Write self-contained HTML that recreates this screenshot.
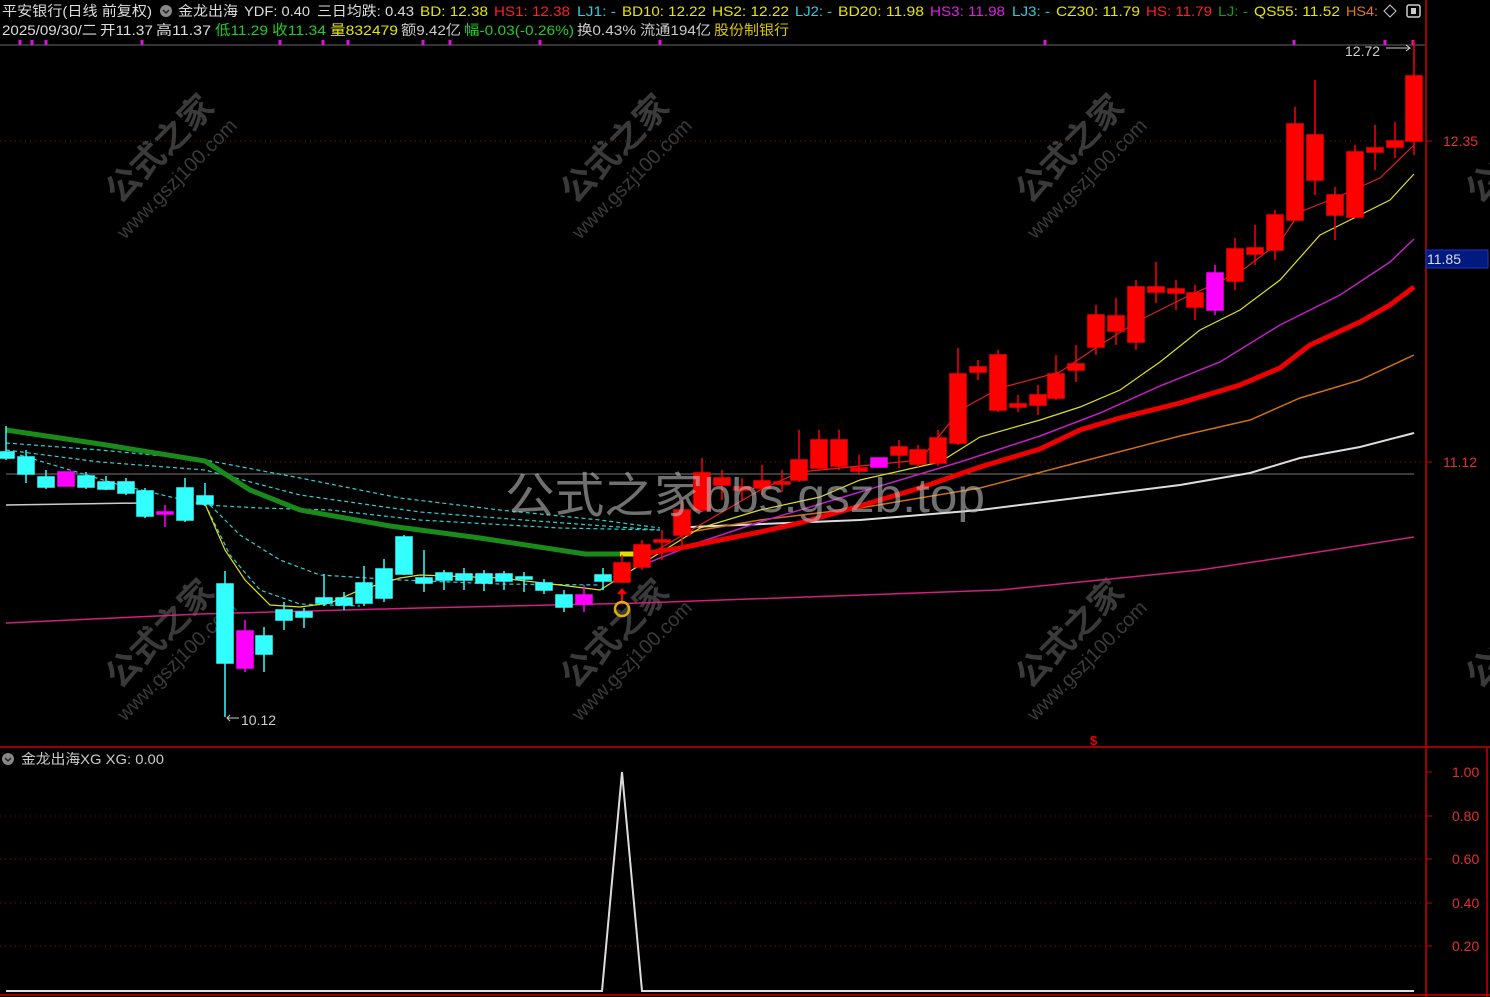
<!DOCTYPE html>
<html><head><meta charset="utf-8"><style>
html,body{margin:0;padding:0;background:#000;}
svg{display:block;}
text{font-family:"Liberation Sans","Noto Sans CJK SC",sans-serif;}
</style></head><body>
<svg width="1490" height="997" viewBox="0 0 1490 997" xmlns="http://www.w3.org/2000/svg">
<rect width="1490" height="997" fill="#000"/>
<!-- header -->
<g font-size="14">
<text x="2" y="16" fill="#ddd" textLength="150" lengthAdjust="spacingAndGlyphs">平安银行(日线 前复权)</text>
<circle cx="166" cy="11" r="6" fill="#888"/><path d="M163 10l3 3 3-3" stroke="#222" stroke-width="1.5" fill="none"/>
<text x="178" y="16" fill="#ddd" textLength="60" lengthAdjust="spacingAndGlyphs">金龙出海</text>
<text x="244" y="16" fill="#ddd" textLength="66" lengthAdjust="spacingAndGlyphs">YDF: 0.40</text>
<text x="317" y="16" fill="#ddd" textLength="97" lengthAdjust="spacingAndGlyphs">三日均跌: 0.43</text>
<text x="420" y="16" fill="#e6e600" textLength="68" lengthAdjust="spacingAndGlyphs">BD: 12.38</text>
<text x="494" y="16" fill="#ff2020" textLength="76" lengthAdjust="spacingAndGlyphs">HS1: 12.38</text>
<text x="577" y="16" fill="#3cd" textLength="39" lengthAdjust="spacingAndGlyphs">LJ1: -</text>
<text x="622" y="16" fill="#e6e600" textLength="84" lengthAdjust="spacingAndGlyphs">BD10: 12.22</text>
<text x="712" y="16" fill="#e6e600" textLength="77" lengthAdjust="spacingAndGlyphs">HS2: 12.22</text>
<text x="795" y="16" fill="#3cd" textLength="37" lengthAdjust="spacingAndGlyphs">LJ2: -</text>
<text x="838" y="16" fill="#e6e600" textLength="86" lengthAdjust="spacingAndGlyphs">BD20: 11.98</text>
<text x="930" y="16" fill="#e020e0" textLength="75" lengthAdjust="spacingAndGlyphs">HS3: 11.98</text>
<text x="1012" y="16" fill="#3cd" textLength="38" lengthAdjust="spacingAndGlyphs">LJ3: -</text>
<text x="1056" y="16" fill="#e6e600" textLength="84" lengthAdjust="spacingAndGlyphs">CZ30: 11.79</text>
<text x="1146" y="16" fill="#ff2020" textLength="66" lengthAdjust="spacingAndGlyphs">HS: 11.79</text>
<text x="1218" y="16" fill="#1a9a1a" textLength="30" lengthAdjust="spacingAndGlyphs">LJ: -</text>
<text x="1254" y="16" fill="#e6e600" textLength="86" lengthAdjust="spacingAndGlyphs">QS55: 11.52</text>
<text x="1346" y="16" fill="#e07a10" textLength="32" lengthAdjust="spacingAndGlyphs">HS4:</text>
<path d="M1390 5l6 6-6 6-6-6z" stroke="#ccc" fill="none"/>
<rect x="1407" y="5" width="13" height="12" rx="2" stroke="#ccc" fill="none" stroke-width="1.5"/><rect x="1411" y="8" width="5" height="6" fill="#ccc"/>
<text x="2" y="35" fill="#ddd" textLength="95" lengthAdjust="spacingAndGlyphs">2025/09/30/二</text>
<text x="100" y="35" fill="#ddd" textLength="53" lengthAdjust="spacingAndGlyphs">开11.37</text>
<text x="156" y="35" fill="#ddd" textLength="55" lengthAdjust="spacingAndGlyphs">高11.37</text>
<text x="215" y="35" fill="#22cc22" textLength="53" lengthAdjust="spacingAndGlyphs">低11.29</text>
<text x="272" y="35" fill="#22cc22" textLength="54" lengthAdjust="spacingAndGlyphs">收11.34</text>
<text x="330" y="35" fill="#e6e600" textLength="68" lengthAdjust="spacingAndGlyphs">量832479</text>
<text x="401" y="35" fill="#ccc" textLength="60" lengthAdjust="spacingAndGlyphs">额9.42亿</text>
<text x="464" y="35" fill="#22cc22" textLength="110" lengthAdjust="spacingAndGlyphs">幅-0.03(-0.26%)</text>
<text x="577" y="35" fill="#ccc" textLength="59" lengthAdjust="spacingAndGlyphs">换0.43%</text>
<text x="640" y="35" fill="#ccc" textLength="71" lengthAdjust="spacingAndGlyphs">流通194亿</text>
<text x="714" y="35" fill="#d8c800" textLength="75" lengthAdjust="spacingAndGlyphs">股份制银行</text>
</g>
<!-- frame -->
<line x1="0" y1="45" x2="1425" y2="45" stroke="#666"/>
<g stroke="#e010e0" stroke-width="3">
<line x1="20" y1="40" x2="20" y2="45"/><line x1="32" y1="40" x2="32" y2="45"/><line x1="46" y1="40" x2="46" y2="45"/><line x1="142" y1="40" x2="142" y2="45"/><line x1="280" y1="40" x2="280" y2="45"/><line x1="323" y1="40" x2="323" y2="45"/><line x1="348" y1="40" x2="348" y2="45"/><line x1="423" y1="40" x2="423" y2="45"/><line x1="450" y1="40" x2="450" y2="45"/><line x1="540" y1="40" x2="540" y2="45"/><line x1="660" y1="40" x2="660" y2="45"/><line x1="1045" y1="40" x2="1045" y2="45"/><line x1="1294" y1="40" x2="1294" y2="45"/><line x1="1385" y1="40" x2="1385" y2="45"/><line x1="1413" y1="40" x2="1413" y2="45"/>
</g>
<line x1="1426" y1="0" x2="1426" y2="997" stroke="#c00" stroke-width="1.5"/>
<line x1="1487" y1="748" x2="1487" y2="997" stroke="#c00" stroke-width="1.5"/>
<line x1="0" y1="747" x2="1490" y2="747" stroke="#c00" stroke-width="1.5"/>
<line x1="0" y1="995" x2="1490" y2="995" stroke="#c00" stroke-width="1.5"/>
<g stroke="#a00" stroke-dasharray="1 4">
<line x1="0" y1="141" x2="1425" y2="141"/><line x1="0" y1="462" x2="1425" y2="462"/>
<line x1="0" y1="816" x2="1425" y2="816"/><line x1="0" y1="859" x2="1425" y2="859"/><line x1="0" y1="903" x2="1425" y2="903"/><line x1="0" y1="946" x2="1425" y2="946"/>
</g>
<line x1="6" y1="474" x2="1414" y2="474" stroke="#777"/>
<g font-size="14" fill="#e03030">
<text x="1443" y="146">12.35</text><text x="1443" y="467">11.12</text>
<text x="1452" y="777">1.00</text><text x="1452" y="821">0.80</text><text x="1452" y="864">0.60</text><text x="1452" y="908">0.40</text><text x="1452" y="951">0.20</text>
</g>
<g stroke="#c00"><line x1="1426" y1="772" x2="1432" y2="772"/><line x1="1426" y1="816" x2="1432" y2="816"/><line x1="1426" y1="859" x2="1432" y2="859"/><line x1="1426" y1="903" x2="1432" y2="903"/><line x1="1426" y1="946" x2="1432" y2="946"/><line x1="1426" y1="141" x2="1432" y2="141"/><line x1="1426" y1="462" x2="1432" y2="462"/></g>
<rect x="1426" y="250" width="62" height="18" fill="#001a80" stroke="#2233cc"/>
<text x="1427" y="264" font-size="14" fill="#ddd">11.85</text>

<!-- watermarks -->
<g fill="#3a3a3a" font-size="34" font-weight="bold">
<text transform="translate(120,205) rotate(-45)">公式之家</text>
<text transform="translate(575,205) rotate(-45)">公式之家</text>
<text transform="translate(1030,205) rotate(-45)">公式之家</text>
<text transform="translate(120,690) rotate(-45)">公式之家</text>
<text transform="translate(575,690) rotate(-45)">公式之家</text>
<text transform="translate(1030,690) rotate(-45)">公式之家</text>
<text transform="translate(1480,205) rotate(-45)">公式</text>
<text transform="translate(1480,690) rotate(-45)">公式</text>
</g>
<g fill="#3a3a3a" font-size="20">
<text transform="translate(125,240) rotate(-45)">www.gszj100.com</text>
<text transform="translate(580,240) rotate(-45)">www.gszj100.com</text>
<text transform="translate(1035,240) rotate(-45)">www.gszj100.com</text>
<text transform="translate(125,722) rotate(-45)">www.gszj100.com</text>
<text transform="translate(580,722) rotate(-45)">www.gszj100.com</text>
<text transform="translate(1035,722) rotate(-45)">www.gszj100.com</text>
</g>

<!-- MA lines -->
<g fill="none">
<polyline stroke="#d02080" stroke-width="1.5" points="6,623 200,614 420,608 640,603 1000,590 1200,570 1280,558 1414,537"/>
<polyline stroke="#ccc" stroke-width="1.5" points="6,505 140,503"/>
<polyline stroke="#ddd" stroke-width="2" points="690,527 860,520 980,510 1100,495 1180,485 1250,473 1300,458 1360,447 1414,433"/>
<polyline stroke="#d07010" stroke-width="1.5" points="690,532 760,520 860,508 980,488 1080,462 1180,436 1250,420 1300,398 1360,380 1414,355"/>
<polyline stroke="#c020c0" stroke-width="1.5" points="650,562 700,542 760,522 860,492 960,462 1040,436 1100,413 1160,386 1220,362 1280,325 1340,295 1390,262 1414,239"/>
<g stroke="#30d0d0" stroke-width="1.2" stroke-dasharray="4 3">
<polyline points="6,443 100,450 205,460 300,478 400,498 500,510 600,520 660,528"/>
<polyline points="6,450 100,462 205,470 300,495 420,512 550,522 660,530"/>
<polyline points="20,455 120,485 205,505 260,508 330,510 420,520 560,528 660,530"/>
<polyline points="205,500 240,535 280,560 320,575 400,580 500,584 600,585"/>
<polyline points="205,504 230,555 260,590 300,604 360,606"/>
</g>
<polyline stroke="#e0e020" stroke-width="1.2" points="205,504 225,550 245,580 270,605 300,607 330,603 360,590 400,578 420,575 500,578 560,585 600,590 640,565 700,528 760,510 820,497 860,480 940,462 980,437 1040,420 1080,407 1120,390 1160,362 1200,330 1240,310 1280,280 1320,235 1360,215 1390,200 1414,174"/>
<polyline stroke="#e02020" stroke-width="1.2" points="640,560 700,525 760,490 800,472 860,466 920,460 960,410 1000,388 1060,372 1100,345 1140,320 1180,300 1240,272 1280,242 1300,212 1340,196 1380,178 1414,145"/>
<polyline stroke="#1a8a1a" stroke-width="5" points="6,430 100,444 205,461 250,490 300,510 390,526 480,538 585,554 620,554"/>
<polyline stroke="#e0e000" stroke-width="5" points="620,554 636,554"/>
<polyline stroke="#ee0000" stroke-width="5" points="636,555 680,548 720,540 760,532 800,523 860,506 920,488 980,467 1040,449 1080,430 1120,418 1180,403 1240,385 1280,368 1310,345 1360,322 1390,305 1414,287"/>
</g>

<!-- candles -->
<g id="candles" stroke-width="1.5">
<g stroke="#3ff" fill="#3ff">
<line x1="6" y1="426" x2="6" y2="460"/><rect x="-2" y="452" width="16" height="6"/>
<line x1="26" y1="450" x2="26" y2="483"/><rect x="18" y="457" width="16" height="17"/>
<line x1="46" y1="470" x2="46" y2="489"/><rect x="38" y="477" width="16" height="10"/>
<line x1="86" y1="472" x2="86" y2="489"/><rect x="78" y="476" width="16" height="11"/>
<line x1="106" y1="476" x2="106" y2="490"/><rect x="98" y="482" width="16" height="7"/>
<line x1="126" y1="478" x2="126" y2="495"/><rect x="118" y="482" width="16" height="11"/>
<line x1="145" y1="488" x2="145" y2="518"/><rect x="137" y="491" width="16" height="25"/>
<line x1="185" y1="478" x2="185" y2="522"/><rect x="177" y="488" width="16" height="32"/>
<line x1="205" y1="483" x2="205" y2="506"/><rect x="197" y="496" width="16" height="8"/>
<line x1="225" y1="571" x2="225" y2="717"/><rect x="217" y="584" width="16" height="79"/>
<line x1="264" y1="627" x2="264" y2="672"/><rect x="256" y="636" width="16" height="18"/>
<line x1="284" y1="602" x2="284" y2="630"/><rect x="276" y="610" width="16" height="10"/>
<line x1="304" y1="608" x2="304" y2="628"/><rect x="296" y="612" width="16" height="5"/>
<line x1="324" y1="574" x2="324" y2="606"/><rect x="316" y="598" width="16" height="5"/>
<line x1="344" y1="592" x2="344" y2="610"/><rect x="336" y="598" width="16" height="7"/>
<line x1="364" y1="566" x2="364" y2="606"/><rect x="356" y="583" width="16" height="20"/>
<line x1="384" y1="559" x2="384" y2="602"/><rect x="376" y="569" width="16" height="29"/>
<line x1="404" y1="535" x2="404" y2="575"/><rect x="396" y="537" width="16" height="37"/>
<line x1="424" y1="550" x2="424" y2="592"/><rect x="416" y="578" width="16" height="5"/>
<line x1="444" y1="570" x2="444" y2="590"/><rect x="436" y="573" width="16" height="7"/>
<line x1="464" y1="568" x2="464" y2="590"/><rect x="456" y="574" width="16" height="6"/>
<line x1="484" y1="570" x2="484" y2="591"/><rect x="476" y="574" width="16" height="9"/>
<line x1="504" y1="571" x2="504" y2="590"/><rect x="496" y="574" width="16" height="7"/>
<line x1="524" y1="572" x2="524" y2="592"/><rect x="516" y="577" width="16" height="2"/>
<line x1="544" y1="579" x2="544" y2="594"/><rect x="536" y="583" width="16" height="7"/>
<line x1="564" y1="590" x2="564" y2="612"/><rect x="556" y="595" width="16" height="12"/>
<line x1="603" y1="568" x2="603" y2="590"/><rect x="595" y="575" width="16" height="6"/>
</g>
<g stroke="#f0f" fill="#f0f">
<rect x="58" y="472" width="16" height="14"/>
<line x1="165" y1="505" x2="165" y2="527"/><rect x="157" y="512" width="16" height="2"/>
<line x1="245" y1="620" x2="245" y2="672"/><rect x="237" y="631" width="16" height="37"/>
<line x1="584" y1="585" x2="584" y2="612"/><rect x="576" y="595" width="16" height="9"/>
<rect x="871" y="458" width="16" height="9"/>
<line x1="1215" y1="265" x2="1215" y2="315"/><rect x="1207" y="273" width="16" height="37"/>
</g>
<g stroke="#f00" fill="#f00">
<line x1="622" y1="555" x2="622" y2="583"/><rect x="614" y="563" width="16" height="19"/>
<line x1="642" y1="540" x2="642" y2="570"/><rect x="634" y="545" width="16" height="22"/>
<line x1="662" y1="530" x2="662" y2="560"/><rect x="654" y="540" width="16" height="2"/>
<line x1="682" y1="500" x2="682" y2="545"/><rect x="674" y="510" width="16" height="25"/>
<line x1="702" y1="458" x2="702" y2="512"/><rect x="694" y="473" width="16" height="37"/>
<line x1="722" y1="470" x2="722" y2="500"/><rect x="714" y="478" width="16" height="7"/>
<line x1="742" y1="478" x2="742" y2="500"/><rect x="734" y="487" width="16" height="3"/>
<line x1="762" y1="465" x2="762" y2="495"/><rect x="754" y="481" width="16" height="7"/>
<line x1="782" y1="470" x2="782" y2="492"/><rect x="774" y="482" width="16" height="2"/>
<line x1="799" y1="430" x2="799" y2="482"/><rect x="791" y="460" width="16" height="20"/>
<line x1="819" y1="430" x2="819" y2="470"/><rect x="811" y="440" width="16" height="28"/>
<line x1="839" y1="430" x2="839" y2="470"/><rect x="831" y="440" width="16" height="26"/>
<line x1="859" y1="455" x2="859" y2="475"/><rect x="851" y="468" width="16" height="3"/>
<line x1="899" y1="440" x2="899" y2="468"/><rect x="891" y="447" width="16" height="8"/>
<line x1="918" y1="445" x2="918" y2="467"/><rect x="910" y="450" width="16" height="14"/>
<line x1="938" y1="430" x2="938" y2="466"/><rect x="930" y="438" width="16" height="25"/>
<line x1="958" y1="348" x2="958" y2="445"/><rect x="950" y="374" width="16" height="69"/>
<line x1="978" y1="360" x2="978" y2="380"/><rect x="970" y="367" width="16" height="5"/>
<line x1="998" y1="350" x2="998" y2="412"/><rect x="990" y="355" width="16" height="55"/>
<line x1="1018" y1="395" x2="1018" y2="412"/><rect x="1010" y="404" width="16" height="3"/>
<line x1="1038" y1="385" x2="1038" y2="415"/><rect x="1030" y="395" width="16" height="10"/>
<line x1="1056" y1="355" x2="1056" y2="400"/><rect x="1048" y="374" width="16" height="24"/>
<line x1="1076" y1="345" x2="1076" y2="382"/><rect x="1068" y="364" width="16" height="6"/>
<line x1="1096" y1="305" x2="1096" y2="355"/><rect x="1088" y="315" width="16" height="32"/>
<line x1="1116" y1="298" x2="1116" y2="345"/><rect x="1108" y="316" width="16" height="15"/>
<line x1="1136" y1="280" x2="1136" y2="350"/><rect x="1128" y="287" width="16" height="55"/>
<line x1="1156" y1="262" x2="1156" y2="303"/><rect x="1148" y="287" width="16" height="5"/>
<line x1="1176" y1="280" x2="1176" y2="310"/><rect x="1168" y="289" width="16" height="4"/>
<line x1="1195" y1="285" x2="1195" y2="320"/><rect x="1187" y="293" width="16" height="14"/>
<line x1="1235" y1="238" x2="1235" y2="290"/><rect x="1227" y="249" width="16" height="32"/>
<line x1="1255" y1="225" x2="1255" y2="265"/><rect x="1247" y="248" width="16" height="6"/>
<line x1="1275" y1="210" x2="1275" y2="260"/><rect x="1267" y="215" width="16" height="35"/>
<line x1="1295" y1="107" x2="1295" y2="220"/><rect x="1287" y="124" width="16" height="96"/>
<line x1="1315" y1="80" x2="1315" y2="195"/><rect x="1307" y="135" width="16" height="45"/>
<line x1="1335" y1="187" x2="1335" y2="240"/><rect x="1327" y="195" width="16" height="20"/>
<line x1="1355" y1="145" x2="1355" y2="218"/><rect x="1347" y="152" width="16" height="65"/>
<line x1="1375" y1="125" x2="1375" y2="170"/><rect x="1367" y="148" width="16" height="4"/>
<line x1="1395" y1="122" x2="1395" y2="158"/><rect x="1387" y="141" width="16" height="6"/>
<line x1="1414" y1="40" x2="1414" y2="155"/><rect x="1406" y="76" width="16" height="65"/>
</g>
</g>
<!-- arrow signal -->
<line x1="622" y1="590" x2="622" y2="602" stroke="#f00" stroke-width="2"/><path d="M617 594l5-6 5 6z" fill="#f00"/>
<circle cx="622" cy="609" r="7" fill="none" stroke="#e0b000" stroke-width="2.5"/>
<text x="1090" y="745" font-size="13" fill="#e00" font-weight="bold">$</text>
<g font-size="14" fill="#ccc">
<text x="1345" y="56">12.72</text><path d="M1386 48h24m-4-3l4 3-4 3" stroke="#ccc" fill="none"/>
<text x="241" y="725">10.12</text><path d="M227 718h12m-9-3l-3 3 3 3" stroke="#ccc" fill="none"/>
</g>
<!-- big watermark -->
<text x="505" y="512" font-size="48" fill="#bbb" fill-opacity="0.6" textLength="480" lengthAdjust="spacingAndGlyphs">公式之家bbs.gszb.top</text>

<!-- lower panel -->
<circle cx="8" cy="759" r="6" fill="#888"/><path d="M5 758l3 3 3-3" stroke="#222" stroke-width="1.5" fill="none"/>
<text x="21" y="764" font-size="14" fill="#ccc" textLength="143" lengthAdjust="spacingAndGlyphs">金龙出海XG  XG: 0.00</text>
<polyline fill="none" stroke="#ddd" stroke-width="2" points="6,991 602,991 622,772 642,991 1414,991"/>
</svg>
</body></html>
